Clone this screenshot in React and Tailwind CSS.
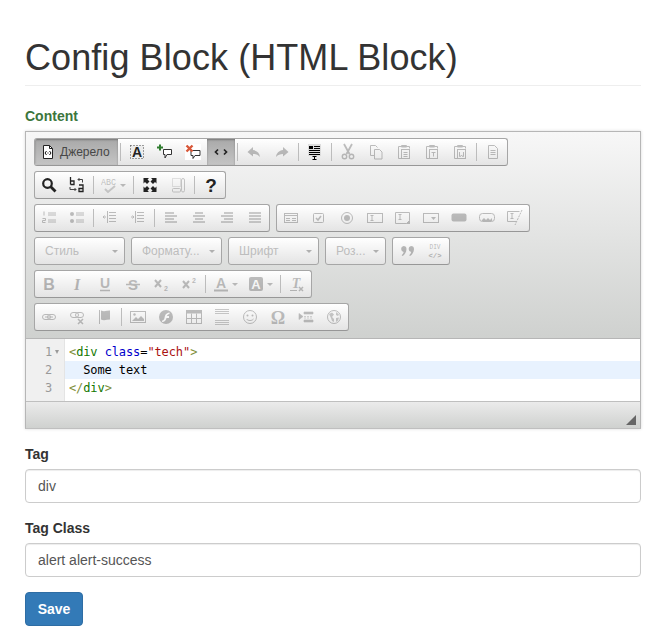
const ICONS = {
  source: <><path d="M3.500 1.500h6l3 3v10h-9z" fill="#fff" stroke="#222" /><path d="M9.500 1.500v3h3" fill="none" stroke="#222" /><path d="M6.500 7L5 9l1.500 2M9.500 7L11 9l-1.500 2" fill="none" stroke="#111" /><rect x="7.500" y="8.500" width="1" height="1" fill="#111" /></>,
  selectAll: <><path d="M1.500 1.500h13v13h-13z" fill="#ececec" stroke="#444" strokeDasharray="1 2" /><text x="8" y="13" textAnchor="middle" fontSize="14" fontWeight="700" fontFamily="Liberation Sans, sans-serif" fill="#222">A</text></>,
  commentAdd: <><path d="M6.500 5.500h8v5H10l-2 3.500v-3.500H6.500z" fill="#fff" stroke="#333" /><path d="M0 3.500h6M3 .5v6" stroke="#2f7d2f" strokeWidth="2" /></>,
  commentDel: <><rect x="0" y="0" width="16" height="16" fill="#fff" /><path d="M6 6.500h9v5h-5l-2 3v-3H6z" fill="#fff" stroke="#333" /><path d="M1.500 1.500l6 6M7.500 1.500l-6 6" stroke="#d8583a" strokeWidth="2.400" /></>,
  code: <path d="M5 5.500L2.500 8 5 10.500M11 5.500L13.500 8 11 10.500" fill="none" stroke="#222" strokeWidth="1.700" />,
  undo: <path d="M7 3L1.500 8 7 12.500V10c3 0 5 .8 7 3-.5-4-3-6.500-7-7z" fill="#333" />,
  redo: <path d="M9 3l5.500 5L9 12.500V10c-3 0-5 .8-7 3 .5-4 3-6.500 7-7z" fill="#333" />,
  templates: <><rect x="1" y="0" width="13" height="12" fill="#ddd" /><rect x="2" y="2" width="4" height="3" fill="#000" /><path d="M7 2.500h6M7 4.500h6M2 6.500h11M2 8.500h11M2 10.500h11" stroke="#000" /><path d="M5.500 12.500h4M5.500 15.500h4M7.500 12.500v3" stroke="#000" /></>,
  cut: <><path d="M4 0l5.500 10M12 0L6.500 10" stroke="#333" strokeWidth="1.800" fill="none" /><circle cx="4.500" cy="12.500" r="2.200" fill="none" stroke="#333" strokeWidth="1.400" /><circle cx="11.500" cy="12.500" r="2.200" fill="none" stroke="#333" strokeWidth="1.400" /></>,
  copy: <path d="M6.500 11.500h-4v-10h5l2 2M6.500 5.500h5l2.500 2.500v7h-7.500z" fill="none" stroke="#333" />,
  paste: <><path d="M5.500 2.500h-3v12h3M10.500 2.500h3v2" fill="none" stroke="#333" /><rect x="5" y="1" width="6" height="2.500" rx="1" fill="#333" /><rect x="5.500" y="5.500" width="8" height="9" fill="none" stroke="#333" /><path d="M7.500 8.500h4M7.500 10.500h4M7.500 12.500h4" stroke="#333" /></>,
  pasteText: <><path d="M5.500 2.500h-3v12h3M10.500 2.500h3v2" fill="none" stroke="#333" /><rect x="5" y="1" width="6" height="2.500" rx="1" fill="#333" /><rect x="5.500" y="5.500" width="8" height="9" fill="none" stroke="#333" /><path d="M7.500 8.500h4M9.500 8.500v4" stroke="#333" /></>,
  pasteWord: <><path d="M5.500 2.500h-3v12h3M10.500 2.500h3v2" fill="none" stroke="#333" /><rect x="5" y="1" width="6" height="2.500" rx="1" fill="#333" /><rect x="5.500" y="5.500" width="8" height="9" fill="none" stroke="#333" /><path d="M7.500 8v4.500h1l1-1.500 1 1.500h1V8" fill="none" stroke="#333" /></>,
  newDoc: <path d="M3.500 1.500h6l3 3v10h-9zM5.500 6.500h5M5.500 8.500h5M5.500 10.500h5" fill="none" stroke="#333" />,
  search: <><circle cx="6.500" cy="6.500" r="4.300" fill="none" stroke="#222" strokeWidth="2.200" /><path d="M9.500 9.500l5 5" stroke="#222" strokeWidth="2.800" /></>,
  replace: <><path d="M1.500 0v7.500M1.500 4h3.500v3.500H1.500" fill="none" stroke="#222" strokeWidth="1.300" /><path d="M10 8h4v6.500h-4v-3h4" fill="none" stroke="#222" strokeWidth="1.300" /><path d="M13.500 5.500V2.500H9M10.500 1L9 2.500 10.500 4M1 10v2.500h6M5.500 11L7 12.500 5.500 14" fill="none" stroke="#444" /></>,
  spell: <><text x="0" y="8" fontSize="9" textLength="15" lengthAdjust="spacingAndGlyphs" fontFamily="Liberation Mono, monospace" fill="#444">ABC</text><path d="M4 12l3 3 7-6" fill="none" stroke="#666" strokeWidth="2" /></>,
  maximize: <path d="M2 1h5L5.500 2.500 7.500 4.500 5 7 3 5 1.500 6.500V1zM14 1H9l1.500 1.500-2 2L11 7l2-2 1.500 1.500V1zM2 15h5l-1.500-1.500 2-2L5 9l-2 2-1.500-1.500V15zM14 15H9l1.500-1.500-2-2L11 9l2 2 1.500-1.500V15z" fill="#222" />,
  blocks: <><rect x="2.500" y="1.500" width="8" height="8" fill="none" stroke="#555" strokeDasharray="1 1" /><rect x="2.500" y="11.500" width="8" height="3.500" rx="1" fill="none" stroke="#555" /><rect x="11.500" y="1.500" width="3" height="13.500" rx="1.500" fill="none" stroke="#555" /></>,
  help: <text x="8" y="15" textAnchor="middle" fontSize="19" fontWeight="700" fontFamily="Liberation Sans, sans-serif" fill="#222">?</text>,
  numList: <path d="M3 1.500v4M1.500 8.500h3v2h-3v2h3M7 3h8M7 5h8M7 10h8M7 12h8" fill="none" stroke="#333" />,
  bulList: <><circle cx="3" cy="4" r="2" fill="#333" /><circle cx="3" cy="11" r="2" fill="#333" /><path d="M7 3h8M7 5h8M7 10h8M7 12h8" stroke="#333" /></>,
  outdent: <path d="M7 2.500h7M7 5.500h7M7 8.500h7M7 11.500h7M5.500 1v12M1 7h3M2.500 5.500L1 7l1.500 1.500" fill="none" stroke="#333" />,
  indent: <path d="M7 2.500h7M7 5.500h7M7 8.500h7M7 11.500h7M5.500 1v12M1 7h3M2.500 5.500L4 7 2.500 8.500" fill="none" stroke="#333" />,
  alignL: <path d="M2 3h9M2 6h12M2 9h9M2 12h12" stroke="#333" strokeWidth="1.600" />,
  alignC: <path d="M4 3h8M2 6h12M4 9h8M2 12h12" stroke="#333" strokeWidth="1.600" />,
  alignR: <path d="M5 3h9M2 6h12M5 9h9M2 12h12" stroke="#333" strokeWidth="1.600" />,
  alignJ: <path d="M2 3h12M2 6h12M2 9h12M2 12h12" stroke="#333" strokeWidth="1.600" />,
  form: <><rect x="1.500" y="3.500" width="13" height="9" fill="none" stroke="#333" /><path d="M1.500 5.500h13M3 8.500h4M9 8.500h4M3 10.500h4M9 10.500h4" stroke="#333" /></>,
  checkbox: <><rect x="2.500" y="3.500" width="10" height="9" rx="1" fill="none" stroke="#333" /><path d="M5 8l2 2 3-4" fill="none" stroke="#333" strokeWidth="1.500" /></>,
  radio: <><circle cx="8" cy="8" r="5.500" fill="none" stroke="#333" /><circle cx="8" cy="8" r="3" fill="#333" /></>,
  textField: <><rect x="0.500" y="3.500" width="15" height="9" fill="none" stroke="#333" /><path d="M3.500 5.500h3M3.500 10.500h3M5 5.500v5" stroke="#333" /></>,
  textArea: <><path d="M0.500 2.500h14v8l-3 3h-11z" fill="none" stroke="#333" /><path d="M3.500 4.500h3M3.500 9.500h3M5 4.500v5" stroke="#333" /><path d="M15 10l-4 4h4z" fill="#333" /></>,
  select: <><rect x="0.500" y="3.500" width="15" height="9" fill="none" stroke="#333" /><path d="M8 7h5l-2.500 3z" fill="#333" /></>,
  button: <rect x="0.500" y="3.500" width="15" height="8" rx="2" fill="#333" />,
  imageBtn: <><rect x="0.500" y="3.500" width="15" height="8" rx="3" fill="none" stroke="#333" /><path d="M3 10l2-2 2 2 2-2 2 2 2-2v3H3z" fill="#333" /></>,
  hidden: <><path d="M0.500 1.500h12M0.500 1.500v10h9" fill="none" stroke="#333" /><path d="M3.500 3.500h3M3.500 8.500h3M5 3.500v5" stroke="#333" /><path d="M15 0L8 15" stroke="#333" strokeDasharray="2 1" /></>,
  quote: <path d="M4.500 3a3 3 0 0 1 3 3c0 3-2 6-4 7l-.8-.8c1-1 1.800-2.200 2-3.300A3 3 0 0 1 4.500 3zM12 3a3 3 0 0 1 3 3c0 3-2 6-4 7l-.8-.8c1-1 1.800-2.200 2-3.300A3 3 0 0 1 12 3z" fill="#222" />,
  div: <><text x="8" y="6" textAnchor="middle" fontSize="8" textLength="11" lengthAdjust="spacingAndGlyphs" fontFamily="Liberation Mono, monospace" fill="#222">DIV</text><text x="8" y="15" textAnchor="middle" fontSize="8" textLength="13" lengthAdjust="spacingAndGlyphs" fontWeight="700" fontFamily="Liberation Mono, monospace" fill="#222">&lt;/&gt;</text></>,
  bold: <text x="8" y="14" textAnchor="middle" fontSize="16" fontWeight="700" fontFamily="Liberation Sans, sans-serif" fill="#222">B</text>,
  italic: <text x="8" y="14" textAnchor="middle" fontSize="16" fontStyle="italic" fontWeight="700" fontFamily="Liberation Serif, serif" fill="#222">I</text>,
  underline: <><text x="8" y="12" textAnchor="middle" fontSize="14" fontWeight="700" fontFamily="Liberation Sans, sans-serif" fill="#333">U</text><path d="M3 14.500h10" stroke="#333" strokeWidth="1.500" /></>,
  strike: <><text x="8" y="14" textAnchor="middle" fontSize="15" fontWeight="700" fontFamily="Liberation Sans, sans-serif" fill="#333">S</text><path d="M1 8.500h14" stroke="#333" strokeWidth="1.500" /></>,
  sub: <><path d="M2 4l6 7M8 4l-6 7" stroke="#333" strokeWidth="2" /><text x="13" y="15" textAnchor="middle" fontSize="7" fontWeight="700" fontFamily="Liberation Sans, sans-serif" fill="#333">2</text></>,
  sup: <><path d="M2 5l6 7M8 5l-6 7" stroke="#333" strokeWidth="2" /><text x="13" y="7" textAnchor="middle" fontSize="7" fontWeight="700" fontFamily="Liberation Sans, sans-serif" fill="#333">2</text></>,
  textColor: <><text x="8" y="12" textAnchor="middle" fontSize="14" fontWeight="700" fontFamily="Liberation Sans, sans-serif" fill="#333">A</text><path d="M1 14.500h14" stroke="#333" strokeWidth="2" /></>,
  bgColor: <><rect x="1" y="1" width="14" height="14" rx="2" fill="#333" /><text x="8" y="13" textAnchor="middle" fontSize="13" fontWeight="700" fontFamily="Liberation Sans, sans-serif" fill="#fff">A</text></>,
  removeFormat: <><text x="7" y="12" textAnchor="middle" fontSize="14" fontStyle="italic" fontWeight="700" fontFamily="Liberation Serif, serif" fill="#333">T</text><path d="M1 14.500h7" stroke="#333" /><path d="M10 11l4 4M14 11l-4 4" stroke="#333" strokeWidth="1.500" /></>,
  link: <><rect x="1.500" y="5.500" width="8" height="5" rx="2.500" fill="none" stroke="#333" /><rect x="6.500" y="5.500" width="8" height="5" rx="2.500" fill="none" stroke="#333" /><path d="M4 8h8" stroke="#333" /></>,
  unlink: <><rect x="1.500" y="3.500" width="8" height="5" rx="2.500" fill="none" stroke="#333" /><rect x="6.500" y="3.500" width="8" height="5" rx="2.500" fill="none" stroke="#333" /><path d="M9 10l5 5M14 10l-5 5" stroke="#333" strokeWidth="1.500" /></>,
  flag: <><path d="M2.500 1v14" stroke="#333" /><path d="M4 1.500c3 1.500 6 0 9 0v9c-3 0-6 1.500-9 0z" fill="#333" /></>,
  image: <><rect x="0.500" y="2.500" width="15" height="11" fill="none" stroke="#333" /><circle cx="4.500" cy="5.500" r="1.200" fill="#333" /><path d="M2 12l4-4 2 2 3-3 3 3v2z" fill="#333" /></>,
  flash: <><circle cx="8" cy="8" r="7" fill="#333" /><path d="M11.500 3.500C8 4 7 6 6.500 9 6 11 5 11.500 4 11.500v1.500c3 0 4-2 4.500-4H11V7H9c.3-1 1-1.800 2.500-2z" fill="#fff" /></>,
  table: <><rect x="0.500" y="1.500" width="15" height="13" fill="none" stroke="#333" /><path d="M0.500 1.500h15v3h-15z" fill="#333" /><path d="M0.500 9.500h15M5.500 4.500v10M10.500 4.500v10" stroke="#333" /></>,
  hr: <path d="M1 .5h14M1 2.500h14M1 4.500h14M1 11.500h14M1 13.500h14M1 15.500h14" stroke="#555" fill="none" />,
  smiley: <><circle cx="8" cy="8" r="6.500" fill="none" stroke="#333" /><circle cx="5.500" cy="6.500" r="1" fill="#333" /><circle cx="10.500" cy="6.500" r="1" fill="#333" /><path d="M4.500 10c1.500 2 5.500 2 7 0" fill="none" stroke="#333" /></>,
  omega: <text x="8" y="15" textAnchor="middle" fontSize="18" fontWeight="700" fontFamily="Liberation Serif, serif" fill="#333">Ω</text>,
  pageBreak: <path d="M1 4.500l4 3-4 3zM6 3h9v2H6zM6 11h9v2H6zM6 7.500h2m1 0h2m1 0h2M6 9h2m1 0h2m1 0h2" fill="#333" stroke="#333" strokeWidth="0.600" />,
  iframe: <><circle cx="8" cy="8" r="6.500" fill="none" stroke="#333" /><path d="M3 5l3-1.500 2 2-2 2.500 2 2v3l-2-1-1-3zM10 3l3 2.500-1 1.500-2-1zM10 9l3-.5-1 3-2 1.500z" fill="#555" /></>,
};

function Icon({ name }) {
  return (
    <svg width="16" height="16" viewBox="0 0 16 16" className="block shrink-0 overflow-visible">
      {ICONS[name]}
    </svg>
  );
}

function Btn({ icon, off, active, arrow }) {
  return (
    <div
      className={`h-[26px] flex items-center justify-center gap-[3px] ${arrow ? 'w-[35px]' : 'w-[28px]'} ${off ? 'opacity-30' : ''} ${active ? 'bg-gradient-to-b from-[#a9a9a9] to-[#c4c4c4] shadow-[inset_0_1px_2px_rgba(0,0,0,0.3)]' : ''}`}
    >
      <Icon name={icon} />
      {arrow && <span className="w-0 h-0 border-x-[3px] border-x-transparent border-t-[3px] border-t-[#333]" />}
    </div>
  );
}

function Sep() {
  return (
    <div className="w-[5px] h-[26px] flex items-center justify-center">
      <div className="w-px h-[18px] bg-[#bcbcbc]" />
    </div>
  );
}

function Group({ children }) {
  return (
    <div className="h-[28px] flex shrink-0 border border-[#a6a6a6] border-b-[#979797] rounded-[3px] bg-gradient-to-b from-white to-[#e4e4e4] overflow-hidden">
      {children}
    </div>
  );
}

function Combo({ label, wide }) {
  return (
    <div className={`h-[28px] shrink-0 flex items-center justify-between pl-[10px] pr-[6px] border border-[#a6a6a6] rounded-[3px] bg-gradient-to-b from-white to-[#e4e4e4] ${wide ? 'w-[91px]' : 'w-[61px]'}`}>
      <span className="text-[12px] text-[#bdbdbd]">{label}</span>
      <span className="w-0 h-0 border-x-[3px] border-x-transparent border-t-[3px] border-t-[#b0b0b0]" />
    </div>
  );
}

function Row({ children }) {
  return <div className="flex gap-[6px] h-[28px]">{children}</div>;
}

function Toolbar() {
  return (
    <div className="flex flex-col gap-[5px] pt-[6px] pb-[7px] pl-[8px] bg-gradient-to-b from-[#f7f7f7] to-[#cfd1cf] border-b border-[#b6b6b6]">
      <Row>
        <Group>
          <div className="w-[83px] h-[26px] flex items-center gap-[4px] pl-[5px] bg-gradient-to-b from-[#a9a9a9] to-[#c4c4c4] shadow-[inset_0_1px_2px_rgba(0,0,0,0.3)]">
            <Icon name="source" />
            <span className="text-[12px] text-[#474747]">Джерело</span>
          </div>
          <Sep />
          <Btn icon="selectAll" />
          <Btn icon="commentAdd" />
          <Btn icon="commentDel" />
          <Btn icon="code" active />
          <Sep />
          <Btn icon="undo" off />
          <Btn icon="redo" off />
          <Sep />
          <Btn icon="templates" />
          <Sep />
          <Btn icon="cut" off />
          <Btn icon="copy" off />
          <Btn icon="paste" off />
          <Btn icon="pasteText" off />
          <Btn icon="pasteWord" off />
          <Sep />
          <Btn icon="newDoc" off />
        </Group>
      </Row>
      <Row>
        <Group>
          <Btn icon="search" />
          <Btn icon="replace" />
          <Sep />
          <Btn icon="spell" off arrow />
          <Sep />
          <Btn icon="maximize" />
          <Btn icon="blocks" off />
          <Sep />
          <Btn icon="help" />
        </Group>
      </Row>
      <Row>
        <Group>
          <Btn icon="numList" off />
          <Btn icon="bulList" off />
          <Sep />
          <Btn icon="outdent" off />
          <Btn icon="indent" off />
          <Sep />
          <Btn icon="alignL" off />
          <Btn icon="alignC" off />
          <Btn icon="alignR" off />
          <Btn icon="alignJ" off />
        </Group>
        <Group>
          <Btn icon="form" off />
          <Btn icon="checkbox" off />
          <Btn icon="radio" off />
          <Btn icon="textField" off />
          <Btn icon="textArea" off />
          <Btn icon="select" off />
          <Btn icon="button" off />
          <Btn icon="imageBtn" off />
          <Btn icon="hidden" off />
        </Group>
      </Row>
      <Row>
        <Combo label="Стиль" wide />
        <Combo label="Формату..." wide />
        <Combo label="Шрифт" wide />
        <Combo label="Роз..." />
        <Group>
          <Btn icon="quote" off />
          <Btn icon="div" off />
        </Group>
      </Row>
      <Row>
        <Group>
          <Btn icon="bold" off />
          <Btn icon="italic" off />
          <Btn icon="underline" off />
          <Btn icon="strike" off />
          <Btn icon="sub" off />
          <Btn icon="sup" off />
          <Sep />
          <Btn icon="textColor" off arrow />
          <Btn icon="bgColor" off arrow />
          <Sep />
          <Btn icon="removeFormat" off />
        </Group>
      </Row>
      <Row>
        <Group>
          <Btn icon="link" off />
          <Btn icon="unlink" off />
          <Btn icon="flag" off />
          <Sep />
          <Btn icon="image" off />
          <Btn icon="flash" off />
          <Btn icon="table" off />
          <Btn icon="hr" off />
          <Btn icon="smiley" off />
          <Btn icon="omega" off />
          <Btn icon="pageBreak" off />
          <Btn icon="iframe" off />
        </Group>
      </Row>
    </div>
  );
}

function CodeArea() {
  return (
    <div className="flex h-[62px] bg-white font-['DejaVu_Sans_Mono',monospace] text-[12px] leading-[18px] tracking-[-0.1px]">
      <div className="w-[39px] shrink-0 pt-[4px] bg-[#f0f0f0] border-r border-[#e4e4e4] text-[#999]">
        <div className="h-[18px] flex items-center justify-end pr-[5px] gap-[3px]">
          1<span className="w-0 h-0 border-x-[2px] border-x-transparent border-t-[4px] border-t-[#999]" />
        </div>
        <div className="h-[18px] pr-[12px] text-right">2</div>
        <div className="h-[18px] pr-[12px] text-right">3</div>
      </div>
      <div className="flex-1 pt-[4px] text-black whitespace-pre">
        <div className="h-[18px] pl-[4px]">
          <span className="text-[#7f8f3a]">&lt;</span>
          <span className="text-[#117700]">div</span>
          {' '}
          <span className="text-[#0000cc]">class</span>
          =
          <span className="text-[#aa1111]">"tech"</span>
          <span className="text-[#7f8f3a]">&gt;</span>
        </div>
        <div className="h-[18px] pl-[4px] bg-[#e8f2fe]">{'  Some text'}</div>
        <div className="h-[18px] pl-[4px]">
          <span className="text-[#7f8f3a]">&lt;/</span>
          <span className="text-[#117700]">div</span>
          <span className="text-[#7f8f3a]">&gt;</span>
        </div>
      </div>
    </div>
  );
}

function Field({ label, value }) {
  return (
    <div className="mb-[15px]">
      <label className="block mb-[5px] text-[14px] leading-[20px] font-bold text-[#333]">{label}</label>
      <input
        readOnly
        value={value}
        className="block w-full h-[34px] px-[12px] text-[14px] text-[#555] bg-white border border-[#ccc] rounded-[4px] shadow-[inset_0_1px_1px_rgba(0,0,0,0.075)]"
      />
    </div>
  );
}

export default function App() {
  return (
    <div className="w-[668px] h-[641px] pl-[25px] pr-[27px] overflow-hidden bg-white font-['Liberation_Sans',sans-serif]">
      <h1 className="pt-[38px] pb-[7px] text-[36px] leading-[40px] font-normal tracking-[0.08px] text-[#333] border-b border-[#eee]">
        Config Block (HTML Block)
      </h1>

      <label className="block mt-[20px] mb-[5px] text-[14px] leading-[20px] font-bold text-[#3c763d]">Content</label>

      <div className="border border-[#b6b6b6] border-b-[#bfbfbf] shadow-[0_0_3px_rgba(0,0,0,0.15)] mb-[15px]">
        <Toolbar />
        <CodeArea />
        <div className="relative h-[27px] border-t border-[#bfbfbf] bg-gradient-to-b from-[#ebebeb] to-[#cfd1cf]">
          <svg width="10" height="10" viewBox="0 0 10 10" className="absolute right-[4px] bottom-[3px]">
            <path d="M10 0v10H0z" fill="#666" />
          </svg>
        </div>
      </div>

      <Field label="Tag" value="div" />
      <Field label="Tag Class" value="alert alert-success" />

      <button className="w-[58px] h-[34px] text-[14px] font-bold text-white bg-[#337ab7] border border-[#2e6da4] rounded-[4px]">
        Save
      </button>
    </div>
  );
}
